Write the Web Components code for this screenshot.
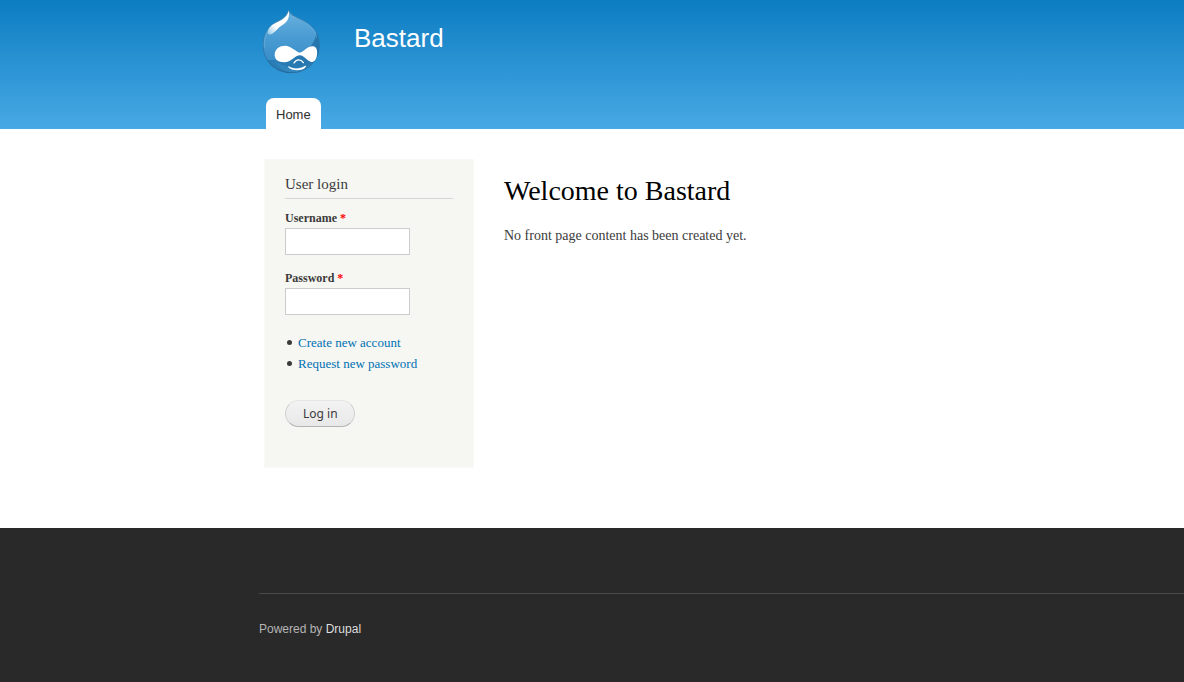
<!DOCTYPE html>
<html lang="en">
<head>
<meta charset="utf-8">
<meta name="viewport" content="width=device-width, initial-scale=1">
<title>Welcome to Bastard | Bastard</title>
<style>
html { background: #292929; }
body { margin: 0; font-family: "Liberation Serif", Georgia, serif; font-size: 14px; line-height: 21px; color: #3b3b3b; --gutter: 259px; }
@media (max-width: 900px) { body { --gutter: 16px; } }
</style>
</head>
<body>
<site-header><span slot="name">Bastard</span><nav-tab href="#home">Home</nav-tab></site-header>
<site-main>
  <login-block slot="sidebar"></login-block>
  <span slot="title">Welcome to Bastard</span>
  <span>No front page content has been created yet.</span>
</site-main>
<site-footer></site-footer>

<template id="site-logo">
<style>
:host { display: block; }
svg { display: block; }
</style>
<svg width="60" height="67" viewBox="23 26 180 201" role="img" aria-label="Home">
  <defs>
    <linearGradient id="drop" x1="0" y1="0" x2="0" y2="1">
      <stop offset="0" stop-color="#70b5e1"/><stop offset=".45" stop-color="#4a9cd3"/><stop offset="1" stop-color="#2f86c1"/>
    </linearGradient>
    <linearGradient id="shine" x1="1" y1="0" x2="0" y2="1">
      <stop offset="0" stop-color="#fff"/><stop offset=".65" stop-color="#fff"/><stop offset="1" stop-color="#8cc4e6"/>
    </linearGradient>
    <linearGradient id="shade" x1="1" y1="0" x2="0" y2="1">
      <stop offset="0" stop-color="#2676ae"/><stop offset=".55" stop-color="#2778b0"/><stop offset="1" stop-color="#2b80ba"/>
    </linearGradient>
    <clipPath id="edge"><path d="M103 30C107 45 121 51 142 61C175 76 196 103 196 136C196 187 157 221 110 221C62 221 25 184 25 136C25 106 39 83 65 68C84 57 99 48 103 30Z"/></clipPath>
  </defs>
  <g clip-path="url(#edge)">
    <path fill="url(#drop)" d="M20 20H204V225H20Z"/>
    <path fill="url(#shade)" d="M186 94C187 124 166 151 138 165C103 183 66 184 38 181C56 209 84 224 112 224C161 224 200 187 200 136C200 120 195 106 186 94Z"/>
    <path fill="#398fc8" opacity=".5" d="M60 186C93 205 126 209 153 201C169 196 185 180 192 166L191 183C174 210 142 224 112 221C94 218 74 205 60 186Z"/>
    <path fill="none" stroke="#235f89" stroke-opacity=".65" stroke-width="4" d="M103 30C107 45 121 51 142 61C175 76 196 103 196 136C196 187 157 221 110 221C62 221 25 184 25 136C25 106 39 83 65 68C84 57 99 48 103 30Z"/>
    <path fill="none" stroke="#b4d9ee" stroke-opacity=".35" stroke-width="2" d="M31 145C27 112 42 91 61 78M114 51C148 61 181 81 188 117"/>
  </g>
  <path fill="url(#shine)" d="M103 34C107 56 99 68 80 80C68 88 61 101 50 105C43 107 38 103 41 94C44 82 57 74 68 69C87 60 99 51 103 34Z"/>
  <path fill="#fff" d="M92 139C110 139 124 157 137 160C149 157 159 140 176 141C187 142 190 155 188 167C186 182 178 190 170 188C159 185 149 169 137 168C121 168 112 189 89 189C71 189 60 180 61 165C62 149 76 139 92 139Z"/>
  <path fill="none" stroke="#fff" stroke-width="4" stroke-linecap="round" d="M119 191C126 179 139 179 147 190"/>
  <path fill="#fff" d="M104 201C113 209 138 210 151 200C154 198 156 200 154 203C146 216 112 216 102 204C101 201 102 200 104 201Z"/>
</svg>
</template>

<template id="site-header">
<style>
:host { display: block; background: linear-gradient(#0c7dc2, #48a9e4); font-family: "Liberation Sans", Arial, sans-serif; }
header { display: flex; flex-direction: column; justify-content: space-between; height: 129px; margin-left: var(--gutter); }
.brand { display: flex; padding: 8px 0 0 3px; gap: 32px; color: inherit; text-decoration: none; }
.name { padding-top: 14px; font-size: 26px; line-height: 32px; color: #fffeff; }
nav { display: flex; padding-left: 7px; }
</style>
<header>
  <a class="brand" href="#home"><site-logo></site-logo><span class="name"><slot name="name"></slot></span></a>
  <nav aria-label="Main menu"><slot></slot></nav>
</header>
</template>

<template id="nav-tab">
<style>
:host { display: block; }
a { display: block; padding: 6px 10px 3px; border-radius: 8px 8px 0 0; background: #fff; color: #333; font-size: 13px; line-height: 22px; text-decoration: none; text-shadow: 0 1px 0 #eee; }
</style>
<a><slot></slot></a>
</template>

<template id="form-field">
<style>
:host { display: block; }
label { display: block; font-size: 12px; line-height: 20px; font-weight: 700; }
label span { color: #f00; }
input { display: block; box-sizing: border-box; width: 125px; height: 27px; padding: 4px; border: 1px solid #ccc; border-radius: 0; background: #fff; font: 12px "Liberation Serif", serif; color: #3b3b3b; outline: 0; }
input:focus { border-color: #0071b3; }
</style>
<label for="field"><slot></slot> <span title="This field is required.">*</span></label>
<input id="field" required>
</template>

<template id="login-block">
<style>
:host { display: block; box-sizing: border-box; padding: 14px 20px 40px; background: #f6f6f2; border: 1px solid #f9f9f6; }
h2 { margin: 0 0 9px; padding-bottom: 4px; border-bottom: 1px solid #d6d6d6; font-size: 15px; line-height: 20px; font-weight: 400; }
form-field { margin-bottom: 13px; }
ul { margin: 17px 0 26px; padding: 0; list-style: none; font-size: 13px; line-height: 21px; }
li { display: flex; align-items: center; gap: 6px; padding-left: 2px; }
li::before { content: ""; width: 5px; height: 5px; border-radius: 50%; background: #3b3b3b; }
a { color: #0071b3; text-decoration: none; }
button { display: block; height: 27px; padding: 0 16px 0 17px; border: 1px solid #e4e4e4; border-bottom-color: #b4b4b4; border-left-color: #d2d2d2; border-right-color: #d2d2d2; border-radius: 14px; background: linear-gradient(#f3f3f3, #e8e8e8); color: #3a3a3a; font: 12px/17px "Noto Sans", sans-serif; }
</style>
<h2>User login</h2>
<form>
  <form-field name="name">Username</form-field>
  <form-field name="pass" type="password">Password</form-field>
  <ul>
    <li><a href="#register">Create new account</a></li>
    <li><a href="#password">Request new password</a></li>
  </ul>
  <button type="button">Log in</button>
</form>
</template>

<template id="site-main">
<style>
:host { display: block; background: #fff; }
.columns { display: grid; grid-template-columns: 210px minmax(0, 1fr); gap: 30px; align-items: start; margin-left: var(--gutter); padding: 30px 16px 60px 5px; }
h1 { margin: 14px 0 16px; font-size: 28px; line-height: 36px; font-weight: 400; color: #000; }
p { margin: 0; }
@media (max-width: 560px) { .columns { grid-template-columns: minmax(0, 1fr); } }
</style>
<div class="columns">
  <aside><slot name="sidebar"></slot></aside>
  <main><h1><slot name="title"></slot></h1><p><slot></slot></p></main>
</div>
</template>

<template id="site-footer">
<style>
:host { display: block; padding: 65px 0 32px; background: #292929; font-family: "Liberation Sans", Arial, sans-serif; }
footer { margin-left: var(--gutter); padding-top: 25px; border-top: 1px solid #4a4a4a; color: #b5b5b5; font-size: 12px; line-height: 20px; }
a { color: #dedede; text-decoration: none; }
</style>
<footer>Powered by <a href="#drupal">Drupal</a></footer>
</template>

<script>
class TemplateElement extends HTMLElement {
  constructor() {
    super();
    const template = document.getElementById(this.localName);
    this.attachShadow({ mode: "open" }).append(template.content.cloneNode(true));
  }
}
class SiteLogo extends TemplateElement {}
class SiteHeader extends TemplateElement {}
class LoginBlock extends TemplateElement {}
class SiteMain extends TemplateElement {}
class SiteFooter extends TemplateElement {}
class NavTab extends TemplateElement {
  connectedCallback() {
    this.shadowRoot.querySelector("a").href = this.getAttribute("href");
  }
}
class FormField extends TemplateElement {
  connectedCallback() {
    const input = this.shadowRoot.querySelector("input");
    input.type = this.getAttribute("type") || "text";
    input.name = this.getAttribute("name");
  }
}
customElements.define("site-logo", SiteLogo);
customElements.define("nav-tab", NavTab);
customElements.define("form-field", FormField);
customElements.define("site-header", SiteHeader);
customElements.define("login-block", LoginBlock);
customElements.define("site-main", SiteMain);
customElements.define("site-footer", SiteFooter);
</script>
</body>
</html>
